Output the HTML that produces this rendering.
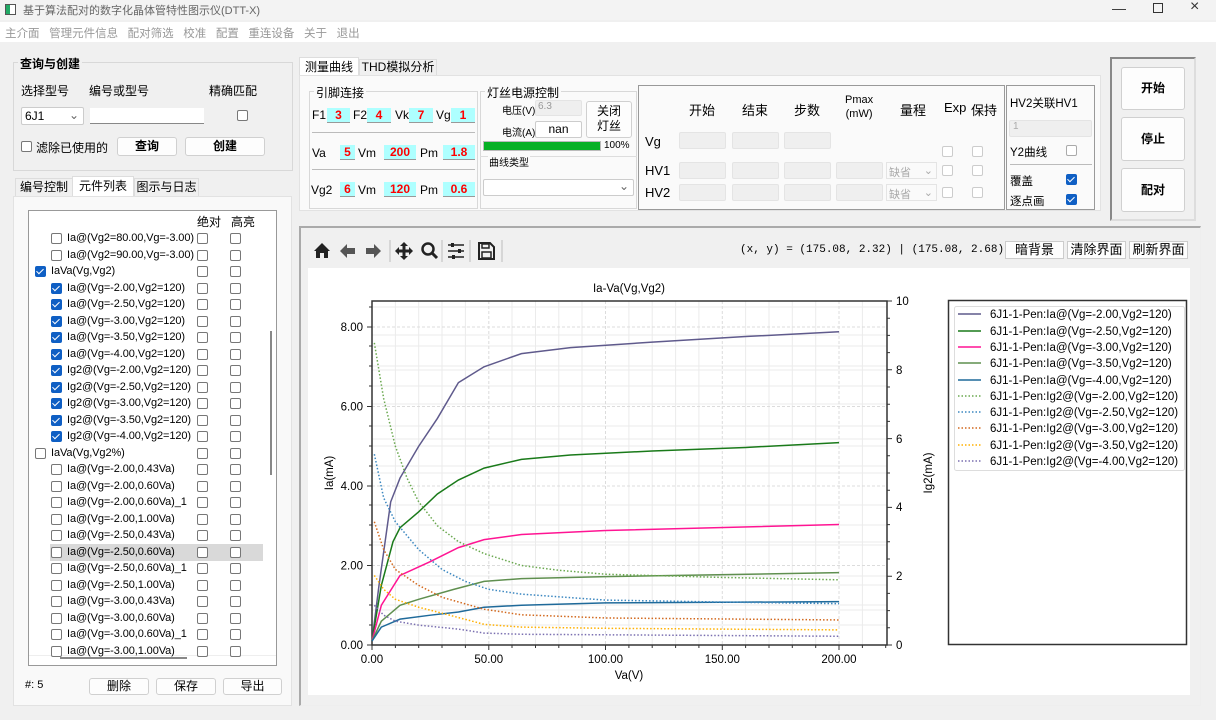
<!DOCTYPE html>
<html><head><meta charset="utf-8"><style>
*{box-sizing:border-box;margin:0;padding:0}
body{width:1216px;height:720px;overflow:hidden;background:#f0f0f0;font-family:"Liberation Sans","Noto Sans CJK SC",sans-serif;font-size:12px;color:#000;position:relative}
.a{position:absolute;white-space:nowrap}
.btn{position:absolute;background:#fdfdfd;border:1px solid #d0d0d0;border-radius:3px;text-align:center;font-weight:bold;font-size:12px}
.box{position:absolute;border:1px solid #d8d8d8}
.cb{position:absolute;width:11px;height:11px;border:1px solid #777;border-radius:2px;background:#fff}
.cbc{position:absolute;width:11px;height:11px;border-radius:2px;background:#0f5fc4}
.cbc::after{content:"";position:absolute;left:3px;top:1px;width:3px;height:6px;border:solid #fff;border-width:0 1px 1px 0;transform:rotate(45deg)}
.pin{position:absolute;background:#aeffff;color:#f00;font-weight:bold;text-align:center;height:15px;line-height:15px;border-bottom:1px solid #999}
.fld{position:absolute;background:#efefef;border:1px solid #e4e4e4;border-radius:2px}
.row{position:absolute;left:0;height:16px;line-height:16px;font-size:11px;letter-spacing:-0.1px}
</style></head><body>
<!-- title bar -->
<div class="a" style="left:0;top:0;width:1216px;height:20px;background:#f3f3f3"></div>
<div class="a" style="left:5px;top:4px;width:11px;height:11px;border:1px solid #555;background:linear-gradient(90deg,#2a6 0 45%,#fff 45%)"></div>
<div class="a" style="left:23px;top:2px;color:#666;font-size:11px">基于算法配对的数字化晶体管特性图示仪(DTT-X)</div>
<div class="a" style="left:1112px;top:0;color:#333;font-size:14px">—</div>
<div class="a" style="left:1153px;top:3px;width:10px;height:10px;border:1px solid #333"></div>
<div class="a" style="left:1190px;top:-2px;color:#333;font-size:16px">×</div>
<!-- menu -->
<div class="a" style="left:0;top:22px;width:1216px;height:20px;background:#fff"></div>
<div class="a" style="left:5px;top:25px;color:#999;font-size:11.5px;word-spacing:0">主介面 &nbsp; 管理元件信息 &nbsp; 配对筛选 &nbsp; 校准 &nbsp; 配置 &nbsp; 重连设备 &nbsp; 关于 &nbsp; 退出</div>

<!-- query group -->
<div class="box" style="left:13px;top:62px;width:280px;height:109px"></div>
<div class="a" style="left:18px;top:55px;background:#f0f0f0;padding:0 2px;font-weight:bold">查询与创建</div>
<div class="a" style="left:21px;top:82px">选择型号</div>
<div class="a" style="left:89px;top:82px">编号或型号</div>
<div class="a" style="left:209px;top:82px">精确匹配</div>
<div class="a" style="left:21px;top:107px;width:63px;height:18px;background:#fff;border:1px solid #ccc;border-radius:2px;padding:1px 3px">6J1<span style="position:absolute;right:4px;top:0;color:#666">⌄</span></div>
<div class="a" style="left:90px;top:108px;width:114px;height:16px;background:#fff;border-bottom:1px solid #888"></div>
<div class="cb" style="left:237px;top:110px"></div>
<div class="cb" style="left:21px;top:141px"></div>
<div class="a" style="left:36px;top:139px">滤除已使用的</div>
<div class="btn" style="left:117px;top:137px;width:60px;height:19px;line-height:17px">查询</div>
<div class="btn" style="left:185px;top:137px;width:80px;height:19px;line-height:17px">创建</div>

<!-- left tabs -->
<div class="a" style="left:15px;top:178px;width:58px;height:19px;background:#f0f0f0;border:1px solid #ddd;line-height:17px;text-align:center">编号控制</div>
<div class="a" style="left:72px;top:176px;width:62px;height:21px;background:#fff;border:1px solid #ddd;border-bottom:none;line-height:19px;text-align:center">元件列表</div>
<div class="a" style="left:134px;top:178px;width:65px;height:19px;background:#f0f0f0;border:1px solid #ddd;line-height:17px;text-align:center">图示与日志</div>
<div class="a" style="left:13px;top:196px;width:279px;height:510px;background:#f9f9f9;border:1px solid #e2e2e2"></div>
<div class="a" style="left:28px;top:210px;width:249px;height:456px;background:#fff;border:1px solid #999;overflow:hidden">
 <div class="a" style="left:168px;top:2px">绝对</div><div class="a" style="left:202px;top:2px">高亮</div>
 <div class="a" style="left:21px;top:333px;width:213px;height:17px;background:#d9d9d9"></div>
 <div class="a" style="left:241px;top:120px;width:2px;height:144px;background:#888"></div>
 <div class="a" style="left:31px;top:446px;width:127px;height:2px;background:#888"></div>
 <div class="a" style="left:0;top:444px;width:247px;height:1px;background:#eee"></div>
</div>
<div class="a" style="left:25px;top:679px;font-size:11px">#: 5</div>
<div class="btn" style="left:89px;top:678px;width:60px;height:17px;line-height:15px;font-weight:normal">删除</div>
<div class="btn" style="left:156px;top:678px;width:60px;height:17px;line-height:15px;font-weight:normal">保存</div>
<div class="btn" style="left:223px;top:678px;width:59px;height:17px;line-height:15px;font-weight:normal">导出</div>

<!-- right tabs -->
<div class="a" style="left:299px;top:57px;width:60px;height:19px;background:#fff;border:1px solid #ddd;border-bottom:none;text-align:center;line-height:18px">测量曲线</div>
<div class="a" style="left:359px;top:59px;width:78px;height:17px;border:1px solid #ddd;text-align:center;line-height:15px">THD模拟分析</div>
<div class="a" style="left:299px;top:75px;width:802px;height:136px;background:#fafafa;border:1px solid #e2e2e2"></div>
<div class="box" style="left:309px;top:91px;width:169px;height:118px"></div>
<div class="a" style="left:314px;top:84px;background:#fafafa;padding:0 2px">引脚连接</div>
<div class="a" style="left:312px;top:108px">F1</div><div class="pin" style="left:327px;top:108px;width:23px">3</div>
<div class="a" style="left:353px;top:108px">F2</div><div class="pin" style="left:367px;top:108px;width:24px">4</div>
<div class="a" style="left:395px;top:108px">Vk</div><div class="pin" style="left:409px;top:108px;width:24px">7</div>
<div class="a" style="left:436px;top:108px">Vg</div><div class="pin" style="left:451px;top:108px;width:24px">1</div>
<div class="a" style="left:312px;top:132px;width:163px;height:1px;background:#bbb"></div>
<div class="a" style="left:312px;top:146px">Va</div><div class="pin" style="left:340px;top:145px;width:15px">5</div>
<div class="a" style="left:358px;top:146px">Vm</div><div class="pin" style="left:384px;top:145px;width:32px">200</div>
<div class="a" style="left:420px;top:146px">Pm</div><div class="pin" style="left:443px;top:145px;width:32px">1.8</div>
<div class="a" style="left:312px;top:169px;width:163px;height:1px;background:#bbb"></div>
<div class="a" style="left:311px;top:183px">Vg2</div><div class="pin" style="left:340px;top:182px;width:15px">6</div>
<div class="a" style="left:358px;top:183px">Vm</div><div class="pin" style="left:384px;top:182px;width:32px">120</div>
<div class="a" style="left:420px;top:183px">Pm</div><div class="pin" style="left:443px;top:182px;width:32px">0.6</div>

<div class="box" style="left:480px;top:91px;width:157px;height:118px"></div>
<div class="a" style="left:485px;top:84px;background:#fafafa;padding:0 2px">灯丝电源控制</div>
<div class="a" style="left:502px;top:102px;font-size:10px">电压(V)</div>
<div class="fld" style="left:535px;top:100px;width:47px;height:16px;color:#999;font-size:10px;padding-left:2px">6.3</div>
<div class="a" style="left:502px;top:124px;font-size:10px">电流(A)</div>
<div class="a" style="left:535px;top:121px;width:47px;height:17px;background:#fff;border:1px solid #ccc;border-radius:2px;text-align:center;line-height:15px">nan</div>
<div class="btn" style="left:586px;top:101px;width:46px;height:37px;font-weight:normal;line-height:15px;padding-top:2px">关闭<br>灯丝</div>
<div class="a" style="left:483px;top:141px;width:118px;height:10px;background:#06b025;border:1px solid #bbb"></div>
<div class="a" style="left:604px;top:140px;font-size:10px">100%</div>
<div class="a" style="left:480px;top:156px;width:157px;height:1px;background:#ddd"></div>
<div class="a" style="left:488px;top:154px;font-size:10px;background:#fafafa;padding:0 1px">曲线类型</div>
<div class="a" style="left:483px;top:179px;width:151px;height:17px;background:#fff;border:1px solid #ccc;border-radius:2px"><span style="position:absolute;right:4px;top:-1px;color:#666">⌄</span></div>

<div class="a" style="left:638px;top:85px;width:367px;height:125px;border:1px solid #999;background:#fafafa"></div>
<div class="a" style="left:689px;top:100px;font-size:13px">开始</div>
<div class="a" style="left:742px;top:100px;font-size:13px">结束</div>
<div class="a" style="left:794px;top:100px;font-size:13px">步数</div>
<div class="a" style="left:845px;top:93px;font-size:11px;text-align:center;line-height:14px">Pmax<br>(mW)</div>
<div class="a" style="left:900px;top:100px;font-size:13px">量程</div>
<div class="a" style="left:944px;top:100px;font-size:13px">Exp</div>
<div class="a" style="left:971px;top:100px;font-size:13px">保持</div>
<div class="a" style="left:645px;top:134px;font-size:13px">Vg</div>
<div class="a" style="left:645px;top:163px;font-size:13px">HV1</div>
<div class="a" style="left:645px;top:185px;font-size:13px">HV2</div>
<div class="fld" style="left:679px;top:132px;width:47px;height:17px"></div><div class="fld" style="left:732px;top:132px;width:47px;height:17px"></div><div class="fld" style="left:784px;top:132px;width:47px;height:17px"></div>
<div class="fld" style="left:679px;top:162px;width:47px;height:17px"></div><div class="fld" style="left:732px;top:162px;width:47px;height:17px"></div><div class="fld" style="left:784px;top:162px;width:47px;height:17px"></div><div class="fld" style="left:836px;top:162px;width:47px;height:17px"></div>
<div class="fld" style="left:679px;top:184px;width:47px;height:17px"></div><div class="fld" style="left:732px;top:184px;width:47px;height:17px"></div><div class="fld" style="left:784px;top:184px;width:47px;height:17px"></div><div class="fld" style="left:836px;top:184px;width:47px;height:17px"></div>
<div class="a" style="left:886px;top:162px;width:51px;height:17px;border:1px solid #e4e4e4;color:#aaa;font-size:11px;padding:1px 2px;background:#fafafa">缺省<span style="position:absolute;right:3px">⌄</span></div>
<div class="a" style="left:886px;top:184px;width:51px;height:17px;border:1px solid #e4e4e4;color:#aaa;font-size:11px;padding:1px 2px;background:#fafafa">缺省<span style="position:absolute;right:3px">⌄</span></div>
<div class="cb" style="left:942px;top:146px;border-color:#ccc"></div><div class="cb" style="left:972px;top:146px;border-color:#ccc"></div>
<div class="cb" style="left:942px;top:165px;border-color:#ccc"></div><div class="cb" style="left:972px;top:165px;border-color:#ccc"></div>
<div class="cb" style="left:942px;top:187px;border-color:#ccc"></div><div class="cb" style="left:972px;top:187px;border-color:#ccc"></div>

<div class="a" style="left:1006px;top:85px;width:89px;height:125px;border:1px solid #999"></div>
<div class="a" style="left:1010px;top:95px;font-size:11.5px">HV2关联HV1</div>
<div class="fld" style="left:1009px;top:120px;width:83px;height:17px;color:#aaa;font-size:10px;padding-left:3px">1</div>
<div class="a" style="left:1010px;top:144px;font-size:11.5px">Y2曲线</div>
<div class="cb" style="left:1066px;top:145px;border-color:#aaa"></div>
<div class="a" style="left:1010px;top:164px;width:82px;height:1px;background:#bbb"></div>
<div class="a" style="left:1010px;top:173px;font-size:11.5px">覆盖</div>
<div class="cbc" style="left:1066px;top:174px"></div>
<div class="a" style="left:1010px;top:193px;font-size:11.5px">逐点画</div>
<div class="cbc" style="left:1066px;top:194px"></div>

<div class="a" style="left:1110px;top:57px;width:86px;height:164px;border:2px solid #888;border-right-color:#ddd;border-bottom-color:#ddd"></div>
<div class="btn" style="left:1121px;top:67px;width:64px;height:43px;line-height:41px">开始</div>
<div class="btn" style="left:1121px;top:117px;width:64px;height:44px;line-height:42px">停止</div>
<div class="btn" style="left:1121px;top:168px;width:64px;height:44px;line-height:42px">配对</div>

<!-- plot frame -->
<div class="a" style="left:299px;top:226px;width:902px;height:480px;border:1px solid #aaa;border-right-color:#eee;border-bottom-color:#eee;border-width:2px 1px 1px 2px"></div>
<div class="a" style="left:308px;top:268px;width:882px;height:427px;background:#fff"></div>
<div class="a" style="left:740px;top:244px;font-family:'Liberation Mono','Noto Sans CJK SC',monospace;font-size:11px;letter-spacing:0">(x, y) = (175.08, 2.32) | (175.08, 2.68)</div>
<div class="a" style="left:1005px;top:241px;width:59px;height:18px;background:#fdfdfd;border:1px solid #ccc;text-align:center;line-height:16px;font-size:13px">暗背景</div>
<div class="a" style="left:1067px;top:241px;width:59px;height:18px;background:#fdfdfd;border:1px solid #ccc;text-align:center;line-height:16px;font-size:13px">清除界面</div>
<div class="a" style="left:1129px;top:241px;width:59px;height:18px;background:#fdfdfd;border:1px solid #ccc;text-align:center;line-height:16px;font-size:13px">刷新界面</div>

<svg class="a" style="left:0;top:0" width="1216" height="720" viewBox="0 0 1216 720" font-family="Liberation Sans, sans-serif">
 <g fill="#222">
  <path d="M314 251 L322 243 L330 251 L328 251 L328 258 L324 258 L324 253 L320 253 L320 258 L316 258 L316 251Z"/>
  <path d="M340 251 L347 244 L347 248 L355 248 L355 254 L347 254 L347 258Z" fill="#555"/>
  <path d="M381 251 L374 244 L374 248 L366 248 L366 254 L374 254 L374 258Z" fill="#555"/>
  <path d="M404 242 L408 246 L405.5 246 L405.5 249.5 L409 249.5 L409 247 L413 251 L409 255 L409 252.5 L405.5 252.5 L405.5 256 L408 256 L404 260 L400 256 L402.5 256 L402.5 252.5 L399 252.5 L399 255 L395 251 L399 247 L399 249.5 L402.5 249.5 L402.5 246 L400 246Z"/>
 </g>
 <circle cx="428" cy="249" r="5.5" fill="none" stroke="#222" stroke-width="2.5"/>
 <path d="M432 253 L437 258" stroke="#222" stroke-width="3"/>
 <g stroke="#222" stroke-width="1.6"><path d="M448 245H464M448 251H464M448 257H464"/></g>
 <g fill="#222"><rect x="451" y="243" width="3" height="4"/><rect x="458" y="249" width="3" height="4"/><rect x="452" y="255" width="3" height="4"/></g>
 <g stroke="#bbb" stroke-width="1"><path d="M390 240V262M442 240V262M470 240V262M502 240V262"/></g>
 <path d="M479 243H490L494 247V259H479Z" fill="none" stroke="#222" stroke-width="2"/>
 <rect x="482" y="244" width="7" height="4" fill="none" stroke="#222" stroke-width="1.5"/>
 <rect x="482" y="252" width="9" height="6" fill="none" stroke="#222" stroke-width="1.5"/>

 <g stroke="#ebebeb" stroke-width="1">
  <path d="M395.4 301V645M418.7 301V645M442 301V645M465.4 301V645M512 301V645M535.5 301V645M558.8 301V645M582 301V645M628.9 301V645M652.2 301V645M675.6 301V645M698.9 301V645M745.6 301V645M769 301V645M792.3 301V645M815.7 301V645M862.4 301V645"/>
  <path d="M372 625H887M372 605H887M372 585H887M372 545H887M372 525H887M372 505H887M372 466H887M372 446H887M372 426H887M372 386H887M372 366H887M372 346H887M372 307H887M372 610H887M372 576H887M372 542H887M372 473H887M372 439H887M372 404H887M372 370H887M372 335H887"/>
 </g>
 <g stroke="#dcdcdc" stroke-width="1" stroke-dasharray="3,2">
  <path d="M488.8 301V645M605.5 301V645M722.3 301V645M839 301V645M372 565.5H887M372 486H887M372 406.5H887M372 327H887"/>
 </g>
 <rect x="372" y="301" width="515" height="344" fill="none" stroke="#333" stroke-width="1.5"/>
 <g stroke="#333" stroke-width="1">
  <path d="M367 645H372M367 565.5H372M367 486H372M367 406.5H372M367 327H372"/>
  <path d="M369 625H372M369 605H372M369 585H372M369 545H372M369 525H372M369 505H372M369 466H372M369 446H372M369 426H372M369 386H372M369 366H372M369 346H372M369 307H372"/>
  <path d="M372 645V650M488.8 645V650M605.5 645V650M722.3 645V650M839 645V650"/>
  <path d="M395.4 645V648M418.7 645V648M442 645V648M465.4 645V648M512 645V648M535.5 645V648M558.8 645V648M582 645V648M628.9 645V648M652.2 645V648M675.6 645V648M698.9 645V648M745.6 645V648M769 645V648M792.3 645V648M815.7 645V648M862.4 645V648M885.7 645V648"/>
  <path d="M887 645H892M887 576.2H892M887 507.4H892M887 438.6H892M887 369.8H892M887 301H892"/>
  <path d="M887 627.8H890M887 610.6H890M887 593.4H890M887 559H890M887 541.8H890M887 524.6H890M887 490.2H890M887 473H890M887 455.8H890M887 421.4H890M887 404.2H890M887 387H890M887 352.6H890M887 335.4H890M887 318.2H890"/>
 </g>
 <g font-size="11.5" fill="#000" text-anchor="end">
  <text x="363" y="649">0.00</text><text x="363" y="569.5">2.00</text><text x="363" y="490">4.00</text><text x="363" y="410.5">6.00</text><text x="363" y="331">8.00</text>
 </g>
 <g font-size="11.5" fill="#000">
  <text x="896" y="649">0</text><text x="896" y="580">2</text><text x="896" y="511">4</text><text x="896" y="443">6</text><text x="896" y="374">8</text><text x="896" y="305">10</text>
 </g>
 <g font-size="11.5" fill="#000" text-anchor="middle">
  <text x="372" y="663">0.00</text><text x="488.8" y="663">50.00</text><text x="605.5" y="663">100.00</text><text x="722.3" y="663">150.00</text><text x="839" y="663">200.00</text>
  <text x="629" y="679">Va(V)</text>
  <text x="629" y="292">Ia-Va(Vg,Vg2)</text>
  <text transform="translate(333,473) rotate(-90)">Ia(mA)</text>
  <text transform="translate(932,473) rotate(-90)">Ig2(mA)</text>
 </g>
 <g transform="translate(372,645) scale(2.335,-39.75)" fill="none" stroke-width="1.5">
  <polyline vector-effect="non-scaling-stroke" stroke="#5f5a8c" points="0,0.1 3,1.5 8,3.6 12,4.2 20,5.0 28,5.7 37,6.6 48,7.0 64,7.33 85,7.48 120,7.62 160,7.76 200,7.88"/>
  <polyline vector-effect="non-scaling-stroke" stroke="#1a7a1a" points="0,0.1 4,1.5 9,2.6 12,2.95 20,3.35 28,3.8 37,4.15 48,4.45 64,4.67 85,4.78 120,4.88 160,4.97 200,5.09"/>
  <polyline vector-effect="non-scaling-stroke" stroke="#ff1493" points="0,0.1 4,1.0 12,1.75 25,2.1 37,2.45 48,2.65 64,2.78 100,2.88 200,3.03"/>
  <polyline vector-effect="non-scaling-stroke" stroke="#5f8f4f" points="0,0.1 4,0.6 12,1.0 20,1.15 35,1.4 48,1.6 64,1.67 100,1.72 200,1.82"/>
  <polyline vector-effect="non-scaling-stroke" stroke="#1f6a9a" points="0,0.1 4,0.45 12,0.65 25,0.75 37,0.83 48,0.95 64,1.0 100,1.06 200,1.09"/>
  <g stroke-dasharray="1.5,2">
  <polyline vector-effect="non-scaling-stroke" stroke="#6aa84f" points="1,7.6 5,6.2 10,5.0 15,4.2 20,3.6 28,3.0 37,2.6 48,2.3 64,2.0 80,1.88 100,1.78 150,1.7 200,1.64"/>
  <polyline vector-effect="non-scaling-stroke" stroke="#3b87c0" points="1,4.8 5,3.7 10,3.1 20,2.4 30,1.9 40,1.6 50,1.4 64,1.28 100,1.13 150,1.08 200,1.04"/>
  <polyline vector-effect="non-scaling-stroke" stroke="#d2691e" points="1,3.1 5,2.4 10,1.9 20,1.5 30,1.2 48,0.9 64,0.76 100,0.68 200,0.63"/>
  <polyline vector-effect="non-scaling-stroke" stroke="#ffb000" points="1,1.75 5,1.4 10,1.15 20,0.95 30,0.8 48,0.52 64,0.45 100,0.42 200,0.38"/>
  <polyline vector-effect="non-scaling-stroke" stroke="#7a6fb0" points="1,1.0 5,0.75 10,0.6 20,0.5 37,0.4 48,0.3 64,0.27 200,0.22"/>
  </g>
 </g>
 <rect x="948.5" y="300.5" width="238" height="344" fill="#fff" stroke="#333" stroke-width="1.5"/>
 <rect x="954.5" y="306.5" width="230" height="164" rx="2" fill="#fff" stroke="#ddd"/>
 <g stroke-width="1.5">
  <path d="M958 314H981" stroke="#5f5a8c"/><path d="M958 331H981" stroke="#1a7a1a"/><path d="M958 347H981" stroke="#ff1493"/><path d="M958 363H981" stroke="#5f8f4f"/><path d="M958 380H981" stroke="#1f6a9a"/>
  <g stroke-dasharray="1.5,2"><path d="M958 396H981" stroke="#6aa84f"/><path d="M958 412H981" stroke="#3b87c0"/><path d="M958 428H981" stroke="#d2691e"/><path d="M958 445H981" stroke="#ffb000"/><path d="M958 461H981" stroke="#7a6fb0"/></g>
 </g>
 <g font-size="11.5" fill="#000">
  <text x="990" y="318">6J1-1-Pen:Ia@(Vg=-2.00,Vg2=120)</text>
  <text x="990" y="335">6J1-1-Pen:Ia@(Vg=-2.50,Vg2=120)</text>
  <text x="990" y="351">6J1-1-Pen:Ia@(Vg=-3.00,Vg2=120)</text>
  <text x="990" y="367">6J1-1-Pen:Ia@(Vg=-3.50,Vg2=120)</text>
  <text x="990" y="384">6J1-1-Pen:Ia@(Vg=-4.00,Vg2=120)</text>
  <text x="990" y="400">6J1-1-Pen:Ig2@(Vg=-2.00,Vg2=120)</text>
  <text x="990" y="416">6J1-1-Pen:Ig2@(Vg=-2.50,Vg2=120)</text>
  <text x="990" y="432">6J1-1-Pen:Ig2@(Vg=-3.00,Vg2=120)</text>
  <text x="990" y="449">6J1-1-Pen:Ig2@(Vg=-3.50,Vg2=120)</text>
  <text x="990" y="465">6J1-1-Pen:Ig2@(Vg=-4.00,Vg2=120)</text>
 </g>
</svg>

<div class="a" style="left:28px;top:210px;width:168px;height:447px;overflow:hidden">
<div style="position:absolute;left:0;top:20px;width:240px">
<div class="row" style="top:0"><span class="cb" style="left:23px;top:3px"></span><span class="a" style="left:39px">Ia@(Vg2=80.00,Vg=-3.00)</span></div>
<div class="row" style="top:16.5px"><span class="cb" style="left:23px;top:3px"></span><span class="a" style="left:39px">Ia@(Vg2=90.00,Vg=-3.00)</span></div>
<div class="row" style="top:33px"><span class="cbc" style="left:7px;top:3px"></span><span class="a" style="left:23px">IaVa(Vg,Vg2)</span></div>
<div class="row" style="top:49.5px"><span class="cbc" style="left:23px;top:3px"></span><span class="a" style="left:39px">Ia@(Vg=-2.00,Vg2=120)</span></div>
<div class="row" style="top:66px"><span class="cbc" style="left:23px;top:3px"></span><span class="a" style="left:39px">Ia@(Vg=-2.50,Vg2=120)</span></div>
<div class="row" style="top:82.5px"><span class="cbc" style="left:23px;top:3px"></span><span class="a" style="left:39px">Ia@(Vg=-3.00,Vg2=120)</span></div>
<div class="row" style="top:99px"><span class="cbc" style="left:23px;top:3px"></span><span class="a" style="left:39px">Ia@(Vg=-3.50,Vg2=120)</span></div>
<div class="row" style="top:115.5px"><span class="cbc" style="left:23px;top:3px"></span><span class="a" style="left:39px">Ia@(Vg=-4.00,Vg2=120)</span></div>
<div class="row" style="top:132px"><span class="cbc" style="left:23px;top:3px"></span><span class="a" style="left:39px">Ig2@(Vg=-2.00,Vg2=120)</span></div>
<div class="row" style="top:148.5px"><span class="cbc" style="left:23px;top:3px"></span><span class="a" style="left:39px">Ig2@(Vg=-2.50,Vg2=120)</span></div>
<div class="row" style="top:165px"><span class="cbc" style="left:23px;top:3px"></span><span class="a" style="left:39px">Ig2@(Vg=-3.00,Vg2=120)</span></div>
<div class="row" style="top:181.5px"><span class="cbc" style="left:23px;top:3px"></span><span class="a" style="left:39px">Ig2@(Vg=-3.50,Vg2=120)</span></div>
<div class="row" style="top:198px"><span class="cbc" style="left:23px;top:3px"></span><span class="a" style="left:39px">Ig2@(Vg=-4.00,Vg2=120)</span></div>
<div class="row" style="top:214.5px"><span class="cb" style="left:7px;top:3px"></span><span class="a" style="left:23px">IaVa(Vg,Vg2%)</span></div>
<div class="row" style="top:231px"><span class="cb" style="left:23px;top:3px"></span><span class="a" style="left:39px">Ia@(Vg=-2.00,0.43Va)</span></div>
<div class="row" style="top:247.5px"><span class="cb" style="left:23px;top:3px"></span><span class="a" style="left:39px">Ia@(Vg=-2.00,0.60Va)</span></div>
<div class="row" style="top:264px"><span class="cb" style="left:23px;top:3px"></span><span class="a" style="left:39px">Ia@(Vg=-2.00,0.60Va)_1</span></div>
<div class="row" style="top:280.5px"><span class="cb" style="left:23px;top:3px"></span><span class="a" style="left:39px">Ia@(Vg=-2.00,1.00Va)</span></div>
<div class="row" style="top:297px"><span class="cb" style="left:23px;top:3px"></span><span class="a" style="left:39px">Ia@(Vg=-2.50,0.43Va)</span></div>
<div class="row" style="top:313.5px"><span class="cb" style="left:23px;top:3px"></span><span class="a" style="left:39px">Ia@(Vg=-2.50,0.60Va)</span></div>
<div class="row" style="top:330px"><span class="cb" style="left:23px;top:3px"></span><span class="a" style="left:39px">Ia@(Vg=-2.50,0.60Va)_1</span></div>
<div class="row" style="top:346.5px"><span class="cb" style="left:23px;top:3px"></span><span class="a" style="left:39px">Ia@(Vg=-2.50,1.00Va)</span></div>
<div class="row" style="top:363px"><span class="cb" style="left:23px;top:3px"></span><span class="a" style="left:39px">Ia@(Vg=-3.00,0.43Va)</span></div>
<div class="row" style="top:379.5px"><span class="cb" style="left:23px;top:3px"></span><span class="a" style="left:39px">Ia@(Vg=-3.00,0.60Va)</span></div>
<div class="row" style="top:396px"><span class="cb" style="left:23px;top:3px"></span><span class="a" style="left:39px">Ia@(Vg=-3.00,0.60Va)_1</span></div>
<div class="row" style="top:412.5px"><span class="cb" style="left:23px;top:3px"></span><span class="a" style="left:39px">Ia@(Vg=-3.00,1.00Va)</span></div>
</div>
</div>
<div class="a" style="left:196px;top:230px;width:50px;height:427px;overflow:hidden">
<div class="cb" style="left:1px;top:3px"></div><div class="cb" style="left:34px;top:3px"></div>
<div class="cb" style="left:1px;top:19.5px"></div><div class="cb" style="left:34px;top:19.5px"></div>
<div class="cb" style="left:1px;top:36px"></div><div class="cb" style="left:34px;top:36px"></div>
<div class="cb" style="left:1px;top:52.5px"></div><div class="cb" style="left:34px;top:52.5px"></div>
<div class="cb" style="left:1px;top:69px"></div><div class="cb" style="left:34px;top:69px"></div>
<div class="cb" style="left:1px;top:85.5px"></div><div class="cb" style="left:34px;top:85.5px"></div>
<div class="cb" style="left:1px;top:102px"></div><div class="cb" style="left:34px;top:102px"></div>
<div class="cb" style="left:1px;top:118.5px"></div><div class="cb" style="left:34px;top:118.5px"></div>
<div class="cb" style="left:1px;top:135px"></div><div class="cb" style="left:34px;top:135px"></div>
<div class="cb" style="left:1px;top:151.5px"></div><div class="cb" style="left:34px;top:151.5px"></div>
<div class="cb" style="left:1px;top:168px"></div><div class="cb" style="left:34px;top:168px"></div>
<div class="cb" style="left:1px;top:184.5px"></div><div class="cb" style="left:34px;top:184.5px"></div>
<div class="cb" style="left:1px;top:201px"></div><div class="cb" style="left:34px;top:201px"></div>
<div class="cb" style="left:1px;top:217.5px"></div><div class="cb" style="left:34px;top:217.5px"></div>
<div class="cb" style="left:1px;top:234px"></div><div class="cb" style="left:34px;top:234px"></div>
<div class="cb" style="left:1px;top:250.5px"></div><div class="cb" style="left:34px;top:250.5px"></div>
<div class="cb" style="left:1px;top:267px"></div><div class="cb" style="left:34px;top:267px"></div>
<div class="cb" style="left:1px;top:283.5px"></div><div class="cb" style="left:34px;top:283.5px"></div>
<div class="cb" style="left:1px;top:300px"></div><div class="cb" style="left:34px;top:300px"></div>
<div class="cb" style="left:1px;top:316.5px"></div><div class="cb" style="left:34px;top:316.5px"></div>
<div class="cb" style="left:1px;top:333px"></div><div class="cb" style="left:34px;top:333px"></div>
<div class="cb" style="left:1px;top:349.5px"></div><div class="cb" style="left:34px;top:349.5px"></div>
<div class="cb" style="left:1px;top:366px"></div><div class="cb" style="left:34px;top:366px"></div>
<div class="cb" style="left:1px;top:382.5px"></div><div class="cb" style="left:34px;top:382.5px"></div>
<div class="cb" style="left:1px;top:399px"></div><div class="cb" style="left:34px;top:399px"></div>
<div class="cb" style="left:1px;top:415.5px"></div><div class="cb" style="left:34px;top:415.5px"></div>
</div>
</body></html>
